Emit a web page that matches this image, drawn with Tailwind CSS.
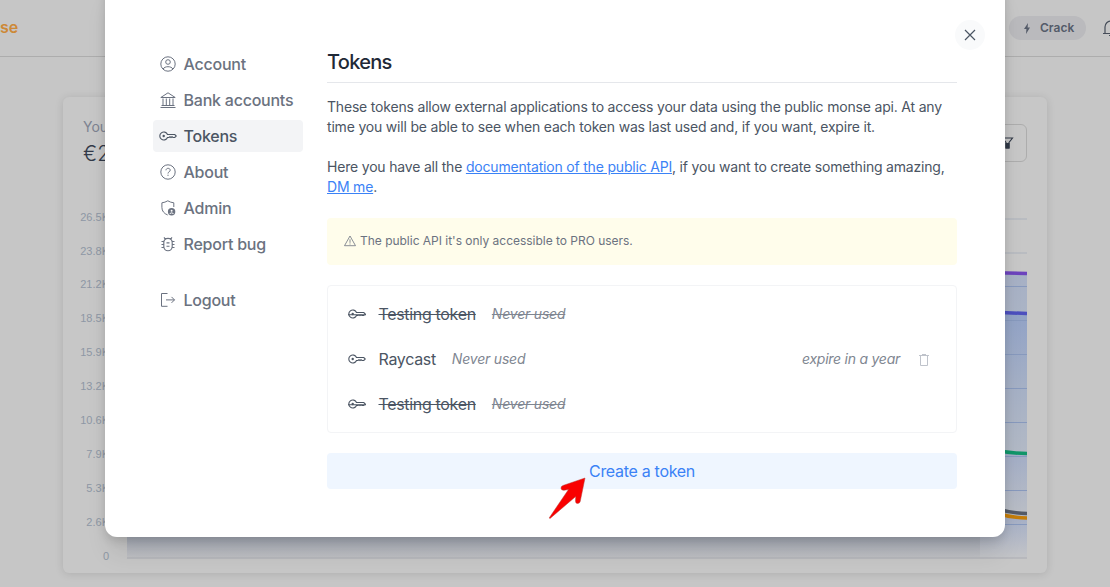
<!DOCTYPE html>
<html lang="en">
<head>
<meta charset="utf-8">
<title>Tokens</title>
<script src="https://cdn.jsdelivr.net/npm/@tailwindcss/browser@4"></script>
</head>
<body class="relative h-[587px] w-[1110px] overflow-hidden bg-[#c6c6c6] font-['Inter',sans-serif] text-[#4b5563]">
<header class="flex h-[57px] items-center justify-between border-b border-[#adadad]">
  <div class="pb-[2px] text-base font-semibold leading-6 text-[#cd8937]">se</div>
  <div class="flex h-full w-[101px] items-center overflow-hidden">
    <div class="flex h-6 w-[77px] shrink-0 items-center rounded-full bg-[#bababd] pl-[14px] text-xs font-semibold text-[#545b69]">
      <svg class="mr-[9px] h-[11px] w-[8px]" viewBox="1 0 8 11" fill="currentColor"><path d="M6 0L2 6h2.400L4 11 8 4.600H5.600z"/></svg>Crack
    </div>
    <svg class="ml-[16px] h-[18px] w-[18px] shrink-0" viewBox="0 0 18 18" fill="none" stroke="#464d59" stroke-width="1.2"><path d="M1 14.5h16M3 14V8a6 6 0 0 1 12 0v6M7 16.5h4M9 2V.5"/></svg>
  </div>
</header>
<section class="mt-10 ml-[63px] flex h-[476px] w-[984px] flex-col rounded-md bg-[#c7c7c7] shadow-[0_1px_8px_rgba(0,0,0,0.12)]">
  <div class="flex h-[103px] shrink-0 justify-between pt-[20px] pr-5 pl-5">
    <div>
      <div class="text-sm leading-5 text-[#7d8391]">You</div>
      <div class="pt-px text-[21px] font-light leading-8 text-[#323a49]">€2</div>
    </div>
    <div class="mt-[7px] flex h-[38px] w-[60px] items-center justify-end rounded-md border border-[#adadad] pr-3">
      <svg class="h-[12px] w-[13px]" viewBox="0 0 13 12" fill="none" stroke="#303846" stroke-width="1.1"><path d="M1.500 1h10L8 5.500v5.500H5V5.500z"/><path d="M5 6.500h3V11H5z" fill="#303846"/></svg>
    </div>
  </div>
  <div class="flex">
    <div class="flex w-[46px] shrink-0 flex-col text-right font-['Liberation_Sans',sans-serif] text-[11px] text-[#8e97a5]">
      <div class="flex h-[33.9px] items-center justify-end">26.5K</div>
      <div class="flex h-[33.9px] items-center justify-end">23.8K</div>
      <div class="flex h-[33.9px] items-center justify-end">21.2K</div>
      <div class="flex h-[33.9px] items-center justify-end">18.5K</div>
      <div class="flex h-[33.9px] items-center justify-end">15.9K</div>
      <div class="flex h-[33.9px] items-center justify-end">13.2K</div>
      <div class="flex h-[33.9px] items-center justify-end">10.6K</div>
      <div class="flex h-[33.9px] items-center justify-end">7.9K</div>
      <div class="flex h-[33.9px] items-center justify-end">5.3K</div>
      <div class="flex h-[33.9px] items-center justify-end">2.6K</div>
      <div class="flex h-[33.9px] items-center justify-end">0</div>
    </div>
    <svg class="ml-[18px] h-[373px] w-[900px] shrink-0" viewBox="127 200 900 373" fill="none">
      <defs>
        <linearGradient id="a" x1="0" y1="273" x2="0" y2="558" gradientUnits="userSpaceOnUse">
          <stop offset="0" stop-color="#a6b0c5"/><stop offset=".14" stop-color="#abb4c5"/>
          <stop offset=".141" stop-color="#91a2c6"/><stop offset=".4" stop-color="#a5b0c5"/><stop offset=".63" stop-color="#b2b9c5"/>
          <stop offset=".631" stop-color="#a2adc6"/><stop offset=".84" stop-color="#b9bdc5"/><stop offset=".861" stop-color="#a5afc6"/><stop offset="1" stop-color="#c3c4c7"/>
        </linearGradient>
        <linearGradient id="b" x1="0" y1="537" x2="0" y2="558" gradientUnits="userSpaceOnUse"><stop stop-color="#a8adb9"/><stop offset="1" stop-color="#c0c1c4"/></linearGradient>
      </defs>
      <path fill="url(#a)" d="M980 273h47v285h-47z"/>
      <path fill="url(#b)" d="M127 530h853v28H127z"/>
      <path stroke="#b5b9c0" stroke-width="1.5" d="M127 219h900M127 253h900"/>
      <path stroke="#8799bd" d="M980 286.5h47M980 320.5h47M980 354.5h47M980 388.5h47M980 422.5h47M980 456.5h47M980 490.5h47M980 524.5h47"/>
      <path stroke="#b3b4ba" stroke-width="1.5" d="M127 558h900"/>
      <g stroke-width="3.5">
        <path stroke="#6c43bd" d="M995 272.8L1027 273.5"/><path stroke="#4c4fbe" d="M995 312q16 1 32 1.5"/>
        <path stroke="#109669" d="M995 450q16 3.5 32 3.5"/><path stroke="#535a67" d="M995 508q16 5.5 32 5.5"/><path stroke="#c57d09" d="M995 512.500q16 5.500 32 5.500"/>
      </g>
    </svg>
  </div>
</section>

<main class="absolute top-[-20px] left-[105px] flex h-[557px] w-[900px] rounded-xl bg-white pt-[68px] pl-12 shadow-[0_20px_25px_-5px_rgba(0,0,0,0.1),0_4px_10px_rgba(0,0,0,0.13)]">
  <nav class="flex w-[150px] shrink-0 flex-col gap-1 text-base font-medium tracking-[-0.23px] text-[#6b7280]">
    <a class="flex h-8 items-center gap-[7.5px] pl-[7px]"><svg class="h-4 w-4" viewBox="0 0 16 16" fill="none" stroke="currentColor"><circle cx="8" cy="8" r="7.2"/><circle cx="8" cy="6" r="2.3"/><path d="M3 13c1.200-1.600 2.800-2.300 5-2.300s3.800.700 5 2.300"/></svg>Account</a>
    <a class="flex h-8 items-center gap-[7.5px] pl-[7px]"><svg class="h-4 w-4" viewBox="0 0 16 16" fill="none" stroke="currentColor"><path d="M.5 15.500h15M1.500 13.500h13M3 6.500v7M6.300 6.500v7M9.700 6.500v7M13 6.500v7M.8 5.500h14.400L8 .8z"/></svg>Bank accounts</a>
    <a class="flex h-8 items-center gap-[6.5px] rounded bg-[#f3f4f6] pl-[6px] text-[#4b5563]"><svg class="h-[18px] w-[18px]" viewBox="0 0 18 18" fill="none" stroke="currentColor" stroke-width="1.100"><path d="M8.500 7.500A4 4 0 1 0 8.500 10.500H10l1-.8 1 .8 1-.8 1 .8h1.800L17.300 9l-1.500-1.500z"/><circle cx="4.700" cy="9" r="1.200" fill="currentColor" stroke="none"/></svg>Tokens</a>
    <a class="flex h-8 items-center gap-[7.5px] pl-[7px]"><svg class="h-4 w-4" viewBox="0 0 16 16" fill="none" stroke="currentColor"><circle cx="8" cy="8" r="7.2"/><path d="M6 6.300C6 3.600 10.200 3.700 10.200 6.200 10.200 7.900 8 7.700 8 9.500M8 10.700v1.200"/></svg>About</a>
    <a class="flex h-8 items-center gap-[7.5px] pl-[7px]"><svg class="h-4 w-4" viewBox="0 0 16 16" fill="none" stroke="currentColor"><path d="M7.700 15C4 13.500 1.900 11 1.900 7.500V2.800Q5 2.500 7.800.8 10.600 2.500 13.800 2.800V7"/><circle cx="11.600" cy="11.800" r="3.700" fill="currentColor" stroke="none"/><circle cx="11.600" cy="10.700" r="1" fill="#fff" stroke="none"/><path stroke="#fff" d="M9.700 13.600q1.900-1.500 3.800 0"/></svg>Admin</a>
    <a class="flex h-8 items-center gap-[7.5px] pl-[7px]"><svg class="h-4 w-4" viewBox="0 0 16 16" fill="none" stroke="currentColor" stroke-width="1.150"><path d="M3.800 6.500a4.200 4.200 0 0 1 8.400 0v4a4.200 4.200 0 0 1-8.400 0zM5.600 3.500L4 1.300M10.400 3.500L12 1.300M4 5.500H1.500M4 8.500H1.500M4 11.500H1.500M12 5.500h2.500M12 8.500h2.500M12 11.500h2.500M6.500 6.800h3M6.500 10.200h3"/></svg>Report bug</a>
    <a class="mt-5 flex h-8 items-center gap-[7.5px] pl-[7px]"><svg class="h-4 w-4" viewBox="0 0 16 16" fill="none" stroke="currentColor"><path d="M7.500 1.500H1.500v12.800h6M6 7.900h8.500M11.500 4.900l3 3-3 3"/></svg>Logout</a>
  </nav>
  <div class="ml-6 w-[630px] shrink-0">
    <h1 class="flex h-[35px] items-start border-b border-[#e5e7eb] text-xl font-medium leading-[28px] tracking-[-0.7px] text-[#1f2937]">Tokens</h1>
    <p class="mt-[14px] text-sm leading-5 tracking-[-0.19px] whitespace-nowrap">These tokens allow external applications to access your data using the public monse api. At any<br>time you will be able to see when each token was last used and, if you want, expire it.<br><br>Here you have all the <a class="text-[#3b82f6] underline">documentation of the public API</a>, if you want to create something amazing,<br><a class="text-[#3b82f6] underline">DM me</a>.</p>
    <div class="mt-[21px] flex h-[47px] items-center gap-1 rounded bg-[#fffdeb] pb-[2px] pl-[17px] text-xs tracking-[-0.02px] text-[#6b7280]"><svg class="h-3 w-3" viewBox="0 0 12 12" fill="none" stroke="currentColor" stroke-width=".8"><path d="M6 1L11.500 10.700H.5zM6 4.300v3.500M6 8.500v1"/></svg>The public API it's only accessible to PRO users.</div>
    <ul class="mt-5 flex h-[148px] flex-col rounded border border-[#f3f4f6] pt-[6px] tracking-[-0.33px]">
      <li class="flex h-[45px] items-center pb-[2px] pl-5"><svg class="mr-[12.500px] h-[18px] w-[18px]" viewBox="0 0 18 18" fill="none" stroke="currentColor" stroke-width="1.100"><path d="M8.500 7.500A4 4 0 1 0 8.500 10.500H10l1-.8 1 .8 1-.8 1 .8h1.800L17.300 9l-1.500-1.500zM0 9.800h18"/><circle cx="4.700" cy="9" r="1.200" fill="currentColor" stroke="none"/></svg><span class="line-through">Testing token</span><i class="mt-px ml-4 text-sm tracking-[-0.2px] text-[#808691] line-through">Never used</i></li>
      <li class="flex h-[45px] items-center pr-[27px] pb-[2px] pl-5"><svg class="mr-[12.500px] h-[18px] w-[18px]" viewBox="0 0 18 18" fill="none" stroke="currentColor" stroke-width="1.100"><path d="M8.500 7.500A4 4 0 1 0 8.500 10.500H10l1-.8 1 .8 1-.8 1 .8h1.800L17.300 9l-1.500-1.500z"/><circle cx="4.700" cy="9" r="1.200" fill="currentColor" stroke="none"/></svg><span>Raycast</span><i class="mt-px ml-4 text-sm tracking-[-0.2px] text-[#808691]">Never used</i><i class="mr-[19px] ml-auto text-sm tracking-[-0.25px] text-[#808691]">expire in a year</i><svg class="mt-[2px] h-3 w-[10px]" viewBox="0 0 10 12" fill="none" stroke="#bfc3cb"><path d="M0 1.500h10M3 .5h4M1.500 2v9.500h7V2"/></svg></li>
      <li class="flex h-[45px] items-center pb-[2px] pl-5"><svg class="mr-[12.500px] h-[18px] w-[18px]" viewBox="0 0 18 18" fill="none" stroke="currentColor" stroke-width="1.100"><path d="M8.500 7.500A4 4 0 1 0 8.500 10.500H10l1-.8 1 .8 1-.8 1 .8h1.800L17.300 9l-1.500-1.500zM0 9.800h18"/><circle cx="4.700" cy="9" r="1.200" fill="currentColor" stroke="none"/></svg><span class="line-through">Testing token</span><i class="mt-px ml-4 text-sm tracking-[-0.2px] text-[#808691] line-through">Never used</i></li>
    </ul>
    <button class="mt-5 block h-9 w-full rounded bg-[#eff6ff] text-base tracking-[-0.3px] text-[#3b82f6]">Create a token</button>
  </div>
  <button class="absolute top-10 right-5 flex h-[30px] w-[30px] items-center justify-center rounded-full bg-[#f9fafb]"><svg class="h-3 w-3" viewBox="0 0 12 12" stroke="#4b5563" stroke-width="1.200"><path d="M1 1l10 10M11 1L1 11"/></svg></button>
</main>
<svg class="absolute top-[476px] left-[546px] h-[46px] w-[42px]" viewBox="546 476 42 46"><path fill="#f90000" stroke="#b83a32" stroke-width=".5" stroke-linejoin="round" d="M585 478l-4.800 23.500q-.5 2-2.700 2-2 0-2-2.200l.2-4.800L550 518.500l-.8-.6L568.500 489.500l-4.500.8q-2.700.3-3-2-.2-2 2-2.800z"/></svg>
</body>
</html>
